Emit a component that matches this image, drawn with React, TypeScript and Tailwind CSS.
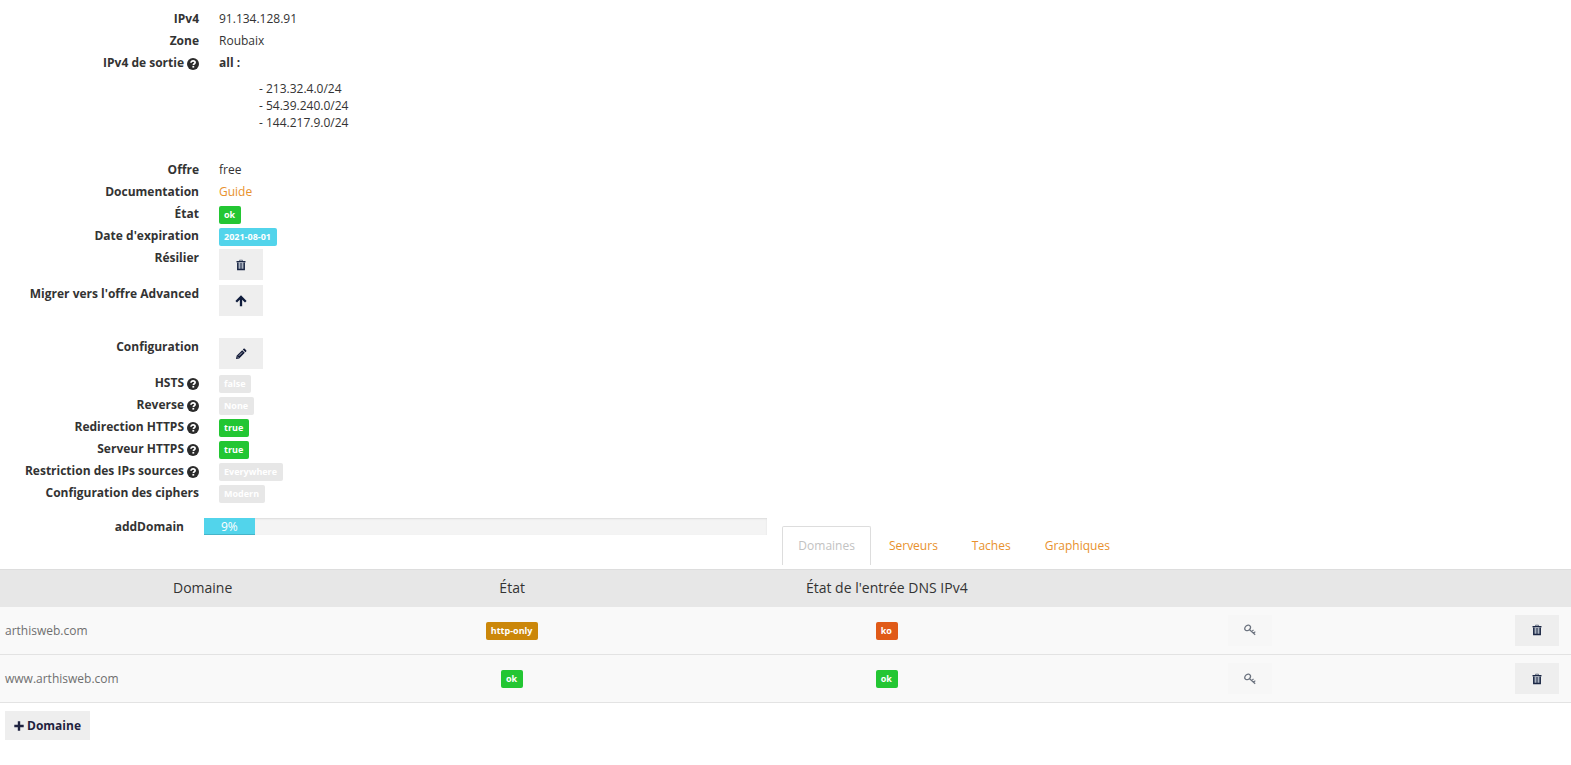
import React from 'react';

interface RowProps {
    label: string;
    help?: boolean;
    children: React.ReactNode;
}

interface Domain {
    name: string;
    state: string;
    stateTone: Tone;
    dns: string;
    dnsTone: Tone;
}

type Tone = 'success' | 'info' | 'muted' | 'warning' | 'danger';

const tones: Record<Tone, string> = {
    success: 'bg-[#23c633]',
    info: 'bg-[#52d4eb]',
    muted: 'bg-[#e7e7e7]',
    warning: 'bg-[#cb870a]',
    danger: 'bg-[#e05a18]',
};

const domains: Domain[] = [
    { name: 'arthisweb.com', state: 'http-only', stateTone: 'warning', dns: 'ko', dnsTone: 'danger' },
    { name: 'www.arthisweb.com', state: 'ok', stateTone: 'success', dns: 'ok', dnsTone: 'success' },
];

const outgoing = ['213.32.4.0/24', '54.39.240.0/24', '144.217.9.0/24'];

const tabs = ['Serveurs', 'Taches', 'Graphiques'];

const HelpIcon = () => (
    <svg viewBox="0 0 12 12" className="mt-1 ml-[3px] size-3 shrink-0" aria-hidden="true">
        <circle cx="6" cy="6" r="6" fill="#2b2b2b" />
        <path d="M4 4.800C4 3.500 5 2.800 6.100 2.800c1.200 0 2 .7 2 1.700 0 1.300-1.700 1.200-1.700 2.600" fill="none" stroke="#fff" strokeWidth="1.7" />
        <rect x="5.400" y="7.900" width="1.800" height="1.700" fill="#fff" />
    </svg>
);

const TrashIcon = () => (
    <svg viewBox="0 0 12 12" className="size-3" aria-hidden="true">
        <path d="M4.500 2V1.200h3V2" fill="none" stroke="#6c7688" strokeWidth="1" />
        <path d="M1.500 2h9v1.400h-9z" fill="#1b2744" />
        <path d="M2.800 3.400v7.100h6.400V3.400" fill="#aab3c0" stroke="#1b2744" strokeWidth="1.500" />
        <path d="M6 4v6" stroke="#1b2744" strokeWidth="1" />
    </svg>
);

const ArrowUpIcon = () => (
    <svg viewBox="0 0 12 12" className="size-3" aria-hidden="true">
        <path d="M1.200 6.800 6 2l4.800 4.800M6 2.400V11.200" fill="none" stroke="#0f1c3c" strokeWidth="2.300" />
    </svg>
);

const PencilIcon = () => (
    <svg viewBox="0 0 12 12" className="size-3" aria-hidden="true">
        <path d="M1 11l.6-3.200 5.600-5.600 2.600 2.600-5.600 5.600zM7.800 1.600l.8-.8c.3-.3.8-.3 1.100 0l1.500 1.500c.3.3.3.8 0 1.100l-.8.8z" fill="#121a38" />
        <path d="M2.200 8.600l1.200 1.200M3.800 7.800l3.400-3.400" stroke="#eee" strokeWidth="0.7" />
    </svg>
);

const KeyIcon = () => (
    <svg viewBox="0 0 12 12" className="size-3" aria-hidden="true">
        <path d="M1.200 5.900C.3 4.800.8 2.900 2.400 1.700 3.900.7 5.600.9 6.200 2.100c.6 1.100.2 2.600-.9 3.600C4 6.700 2 6.900 1.200 5.900z" fill="none" stroke="#6c737f" strokeWidth="1.300" />
        <path d="M5.300 5.500l5.900 5.300M7.700 7.700l1.800-1.800M9.500 9.400l1.800-1.800" fill="none" stroke="#6c737f" strokeWidth="1.200" />
    </svg>
);

const Badge = ({ tone, children }: { tone: Tone; children: React.ReactNode }) => (
    <span className={`mt-px inline-block h-[18px] rounded-xs pr-[6px] pl-[5px] align-top text-[9px] leading-[18px] font-bold text-white ${tones[tone]}`}>
        {children}
    </span>
);

const IconButton = ({ label, disabled, children }: { label: string; disabled?: boolean; children: React.ReactNode }) => (
    <button
        type="button"
        aria-label={label}
        disabled={disabled}
        className="inline-flex h-[31px] w-11 items-center justify-center bg-[#eee] align-top disabled:bg-[#f7f7f7]"
    >
        {children}
    </button>
);

const Row = ({ label, help, children }: RowProps) => (
    <div className="flex gap-5">
        <dt className="flex w-[199px] shrink-0 justify-end font-bold whitespace-nowrap">
            {label}
            {help && <HelpIcon />}
        </dt>
        <dd className="min-h-[17px]">{children}</dd>
    </div>
);

const App: React.FC = () => (
    <main className="bg-white font-['Open_Sans',sans-serif] text-xs leading-[17px] text-[#333]">
        <dl className="flex flex-col gap-[5px] pt-[10px]">
            <Row label="IPv4">91.134.128.91</Row>
            <Row label="Zone">Roubaix</Row>
            <Row label="IPv4 de sortie" help>
                <span className="font-bold">all :</span>
                <ul className="mt-[9px] mb-[25px] pl-10">
                    {outgoing.map((ip) => (
                        <li key={ip}>- {ip}</li>
                    ))}
                </ul>
            </Row>
            <Row label="Offre">free</Row>
            <Row label="Documentation">
                <a href="#guide" className="text-[#e8912d]">Guide</a>
            </Row>
            {/* Badges are a little taller than the text line */}
            <div className="-mb-[2px]"><Row label="État"><Badge tone="success">ok</Badge></Row></div>
            <div className="-mb-[2px]"><Row label="Date d'expiration"><Badge tone="info">2021-08-01</Badge></Row></div>
            <Row label="Résilier"><IconButton label="Résilier"><TrashIcon /></IconButton></Row>
            <Row label="Migrer vers l'offre Advanced"><IconButton label="Migrer"><ArrowUpIcon /></IconButton></Row>
        </dl>

        <dl className="mt-[22px] flex flex-col gap-[3px]">
            <div className="mb-[2px]"><Row label="Configuration"><IconButton label="Configuration"><PencilIcon /></IconButton></Row></div>
            <Row label="HSTS" help><Badge tone="muted">false</Badge></Row>
            <Row label="Reverse" help><Badge tone="muted">None</Badge></Row>
            <Row label="Redirection HTTPS" help><Badge tone="success">true</Badge></Row>
            <Row label="Serveur HTTPS" help><Badge tone="success">true</Badge></Row>
            <Row label="Restriction des IPs sources" help><Badge tone="muted">Everywhere</Badge></Row>
            <Row label="Configuration des ciphers"><Badge tone="muted">Modern</Badge></Row>
        </dl>

        <div className="mt-[15px] flex items-start">
            <div className="flex w-[49.8%] gap-5 pr-[15px]">
                <span className="w-[184px] shrink-0 text-right font-bold">addDomain</span>
                <div className="h-[17px] flex-1 bg-[#f4f4f4] shadow-[inset_0_1px_2px_rgba(0,0,0,0.1)]">
                    <div className="h-full bg-[#52d4eb] text-center text-white shadow-[inset_0_-1px_0_rgba(0,0,0,0.15)]" style={{ width: '9%' }}>
                        9%
                    </div>
                </div>
            </div>
            <nav className="mt-2 flex gap-[2px]">
                <a href="#domaines" className="rounded-t-xs border border-b-0 border-[#ddd] px-[15px] pt-[10px] pb-[11px] text-[#c2c2c2]">
                    Domaines
                </a>
                {tabs.map((tab) => (
                    <a key={tab} href={`#${tab.toLowerCase()}`} className="px-4 pt-[11px] pb-[11px] text-[#e8912d]">
                        {tab}
                    </a>
                ))}
            </nav>
        </div>

        <table className="mt-1 w-full table-fixed border-collapse text-center">
            <thead>
                <tr className="h-[37px] border-t border-[#ddd] bg-[#e7e7e7] text-sm">
                    <th className="w-[25.8%] font-normal">Domaine</th>
                    <th className="w-[13.6%] font-normal">État</th>
                    <th className="w-[34.1%] font-normal">État de l'entrée DNS IPv4</th>
                    <th className="w-[12.2%]" />
                    <th />
                </tr>
            </thead>
            <tbody>
                {domains.map((domain) => (
                    <tr key={domain.name} className="h-12 border-b border-[#e3e3e3] bg-[#f9f9f9]">
                        <td className="pl-[5px] text-left text-[#6f6f6f]">{domain.name}</td>
                        <td><Badge tone={domain.stateTone}>{domain.state}</Badge></td>
                        <td><Badge tone={domain.dnsTone}>{domain.dns}</Badge></td>
                        <td><IconButton label="Certificat" disabled><KeyIcon /></IconButton></td>
                        <td className="pr-3 text-right"><IconButton label="Supprimer"><TrashIcon /></IconButton></td>
                    </tr>
                ))}
            </tbody>
        </table>

        <button type="button" className="mt-2 ml-[5px] flex h-[29px] items-center gap-[3px] bg-[#eee] px-[9px] font-bold text-[#1f2340]">
            <svg viewBox="0 0 10 10" className="size-[10px]" aria-hidden="true">
                <path d="M5 .3v9.400M.3 5h9.400" stroke="#1f2340" strokeWidth="2.400" />
            </svg>
            Domaine
        </button>
    </main>
);

export default App;
